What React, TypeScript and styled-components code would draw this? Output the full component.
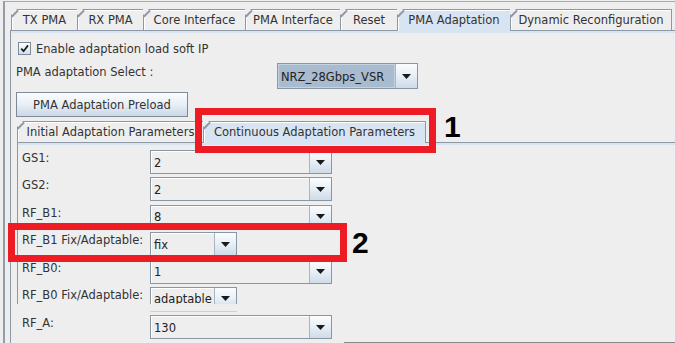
import React from "react";
import styled, { createGlobalStyle } from "styled-components";

const BORDER = "#8c98a5";
const SEL = "#d8e4f1";

const Global = createGlobalStyle`
  html, body { margin: 0; padding: 0; background: #eeeeee; }
  body { font-family: "DejaVu Sans", "Liberation Sans", sans-serif; }
`;

const Screen = styled.div`
  position: relative;
  width: 675px;
  height: 343px;
  overflow: hidden;
  background: #eeeeee;
  font-family: "DejaVu Sans", "Liberation Sans", sans-serif;
  font-size: 11.5px;
  color: #333333;
`;

const Frame = styled.div`
  margin: 1px 0 0 3px;
  height: 342px;
  box-sizing: border-box;
  border-top: 1px solid #a3adb8;
  border-left: 2px solid #929daa;
  padding: 7px 0 0 5px;
  display: flex;
  flex-direction: column;
`;

const TabStrip = styled.div<{ $indent: number }>`
  display: flex;
  align-items: flex-end;
  height: 21px;
  padding-left: ${(p) => p.$indent}px;
  position: relative;
  z-index: 1;
  flex-shrink: 0;
`;

const Tab = styled.div<{ $w: number; $sel?: boolean; $last?: boolean }>`
  position: relative;
  box-sizing: border-box;
  width: ${(p) => p.$w}px;
  height: ${(p) => (p.$sel ? 22 : 21)}px;
  margin-bottom: ${(p) => (p.$sel ? -1 : 0)}px;
  background: ${(p) => (p.$sel ? SEL : "#eeeeee")};
  border-top: 1px solid ${BORDER};
  border-left: 1px solid ${BORDER};
  border-right: ${(p) => (p.$last ? `1px solid ${BORDER}` : "none")};
  box-shadow: inset 1px 1px 0 #ffffff;
  clip-path: polygon(0 6px, 6px 0, 100% 0, 100% 100%, 0 100%);
  display: flex;
  align-items: center;
  justify-content: center;
  padding-bottom: ${(p) => (p.$sel ? 1 : 0)}px;
  white-space: nowrap;
  color: #333333;
  &::before {
    content: "";
    position: absolute;
    left: -1px;
    top: 6px;
    width: 9px;
    height: 1.6px;
    background: ${BORDER};
    transform-origin: 0 0;
    transform: rotate(-45deg);
  }
`;

const Panel = styled.div`
  flex: 1;
  min-height: 0;
  border-top: 1px solid ${BORDER};
  border-left: 1px solid ${BORDER};
  box-shadow: inset 0 2px 0 ${SEL};
  display: flex;
  flex-direction: column;
`;

const CheckRow = styled.label`
  display: flex;
  align-items: center;
  gap: 5px;
  height: 13px;
  margin: 11px 0 0 7px;
`;

const CheckBox = styled.span`
  box-sizing: border-box;
  width: 13px;
  height: 13px;
  border: 1px solid #7d8a97;
  background: linear-gradient(#ffffff, #d3dfeb);
  display: flex;
  align-items: center;
  justify-content: center;
`;

const SelectRow = styled.div`
  display: flex;
  align-items: flex-start;
  margin: 8px 0 0 5px;
  height: 26px;
`;

const SelectLabel = styled.span`
  width: 261px;
  margin-top: 2px;
  white-space: nowrap;
`;

const ComboBox = styled.div<{ $w: number; $h: number }>`
  box-sizing: border-box;
  width: ${(p) => p.$w}px;
  height: ${(p) => p.$h}px;
  border: 1px solid #8996a3;
  display: flex;
  flex-shrink: 0;
`;

const ComboText = styled.div<{ $focus?: boolean }>`
  flex: 1;
  display: flex;
  align-items: center;
  padding: 1px 0 0 3px;
  background: ${(p) => (p.$focus ? "#a8bbcf" : "#eeeeee")};
  box-shadow: ${(p) => (p.$focus ? "inset 0 0 0 1px #c5d3e1" : "inset 1px 1px 0 #ffffff")};
  color: #222222;
  white-space: nowrap;
  overflow: hidden;
`;

const ArrowBtn = styled.div`
  width: 21px;
  border-left: 1px solid #aab5c1;
  background: linear-gradient(#fbfdff 0%, #e9f0f7 45%, #cfdbe8 100%);
  display: flex;
  align-items: center;
  justify-content: center;
`;

const PushButton = styled.button`
  box-sizing: border-box;
  width: 172px;
  height: 25px;
  margin: 3px 0 0 5px;
  border: 1px solid #7d8a97;
  background: linear-gradient(#fbfcfe 0%, #e8eff6 50%, #cad7e5 100%);
  font: inherit;
  color: #333333;
  padding: 0;
`;

const InnerTabs = styled(TabStrip)`
  margin: 4px 0 0 6px;
`;

const InnerPanel = styled.div`
  height: 162px;
  flex-shrink: 0;
  margin-left: 6px;
  overflow: hidden;
  border-top: 1px solid ${BORDER};
  border-left: 1px solid ${BORDER};
  box-shadow: inset 0 2px 0 ${SEL};
  padding: 7px 0 0 4px;
  box-sizing: border-box;
`;

const ParamGrid = styled.div`
  display: grid;
  grid-template-columns: 128px auto;
  grid-auto-rows: 24px;
  row-gap: 3.4px;
  align-items: start;
  justify-items: start;
`;

const ParamLabel = styled.span`
  padding-top: 1px;
  white-space: nowrap;
`;

const ClipEdge = styled.div`
  height: 1px;
  width: 87px;
  margin: 7px 0 0 139px;
  background: #c9d1da;
`;

const LooseRow = styled(ParamGrid)`
  margin: 3px 0 0 11px;
`;

const BottomRule = styled.div`
  height: 1px;
  margin: 3px 0 0 333px;
  background: #8a8a8a;
`;

const RedBox = styled.div<{ $x: number; $y: number; $w: number; $h: number }>`
  position: absolute;
  left: ${(p) => p.$x}px;
  top: ${(p) => p.$y}px;
  width: ${(p) => p.$w}px;
  height: ${(p) => p.$h}px;
  box-sizing: border-box;
  border: 7px solid #ed1c24;
  z-index: 5;
`;

const Callout = styled.span<{ $x: number; $y: number }>`
  position: absolute;
  left: ${(p) => p.$x}px;
  top: ${(p) => p.$y}px;
  font-family: "Liberation Sans", Arial, sans-serif;
  font-weight: bold;
  font-size: 30px;
  line-height: 30px;
  color: #000000;
  z-index: 5;
`;

const Arrow = () => (
  <svg width="9" height="5" viewBox="0 0 9 5">
    <path d="M0 0 H9 L4.5 5 Z" fill="#1a1a1a" />
  </svg>
);

const Combo: React.FC<{ w: number; h?: number; value: string; focus?: boolean }> = ({
  w,
  h = 24,
  value,
  focus,
}) => (
  <ComboBox $w={w} $h={h}>
    <ComboText $focus={focus}>{value}</ComboText>
    <ArrowBtn>
      <Arrow />
    </ArrowBtn>
  </ComboBox>
);

const topTabs = [
  { label: "TX PMA", w: 66 },
  { label: "RX PMA", w: 66 },
  { label: "Core Interface", w: 102 },
  { label: "PMA Interface", w: 95 },
  { label: "Reset", w: 57 },
  { label: "PMA Adaptation", w: 113, sel: true },
  { label: "Dynamic Reconfiguration", w: 162 },
];

const params = [
  { label: "GS1:", value: "2", w: 182 },
  { label: "GS2:", value: "2", w: 182 },
  { label: "RF_B1:", value: "8", w: 182 },
  { label: "RF_B1 Fix/Adaptable:", value: "fix", w: 87 },
  { label: "RF_B0:", value: "1", w: 182 },
  { label: "RF_B0 Fix/Adaptable:", value: "adaptable", w: 87 },
];

export default function App() {
  return (
    <Screen>
      <Global />
      <Frame>
        <TabStrip $indent={1}>
          {topTabs.map((t, i) => (
            <Tab key={t.label} $w={t.w} $sel={t.sel} $last={i === topTabs.length - 1}>
              {t.label}
            </Tab>
          ))}
        </TabStrip>
        <Panel>
          <CheckRow>
            <CheckBox>
              <svg width="9" height="9" viewBox="0 0 9 9">
                <path d="M1.2 4.6 L3.6 7.2 L8 1.4" fill="none" stroke="#1e1e1e" strokeWidth="1.8" />
              </svg>
            </CheckBox>
            Enable adaptation load soft IP
          </CheckRow>
          <SelectRow>
            <SelectLabel>PMA adaptation Select :</SelectLabel>
            <Combo w={141} h={26} value="NRZ_28Gbps_VSR" focus />
          </SelectRow>
          <PushButton>PMA Adaptation Preload</PushButton>
          <InnerTabs $indent={0}>
            <Tab $w={186}>Initial Adaptation Parameters</Tab>
            <Tab $w={223} $sel $last>
              Continuous Adaptation Parameters
            </Tab>
          </InnerTabs>
          <InnerPanel>
            <ParamGrid>
              {params.map((p) => (
                <React.Fragment key={p.label}>
                  <ParamLabel>{p.label}</ParamLabel>
                  <Combo w={p.w} value={p.value} />
                </React.Fragment>
              ))}
            </ParamGrid>
          </InnerPanel>
          <ClipEdge />
          <LooseRow>
            <ParamLabel>RF_A:</ParamLabel>
            <Combo w={182} value="130" />
          </LooseRow>
          <BottomRule />
        </Panel>
      </Frame>
      <RedBox $x={195} $y={108} $w={241} $h={45} />
      <Callout $x={444} $y={112}>1</Callout>
      <RedBox $x={8} $y={223} $w={339} $h={39} />
      <Callout $x={352} $y={228}>2</Callout>
    </Screen>
  );
}
